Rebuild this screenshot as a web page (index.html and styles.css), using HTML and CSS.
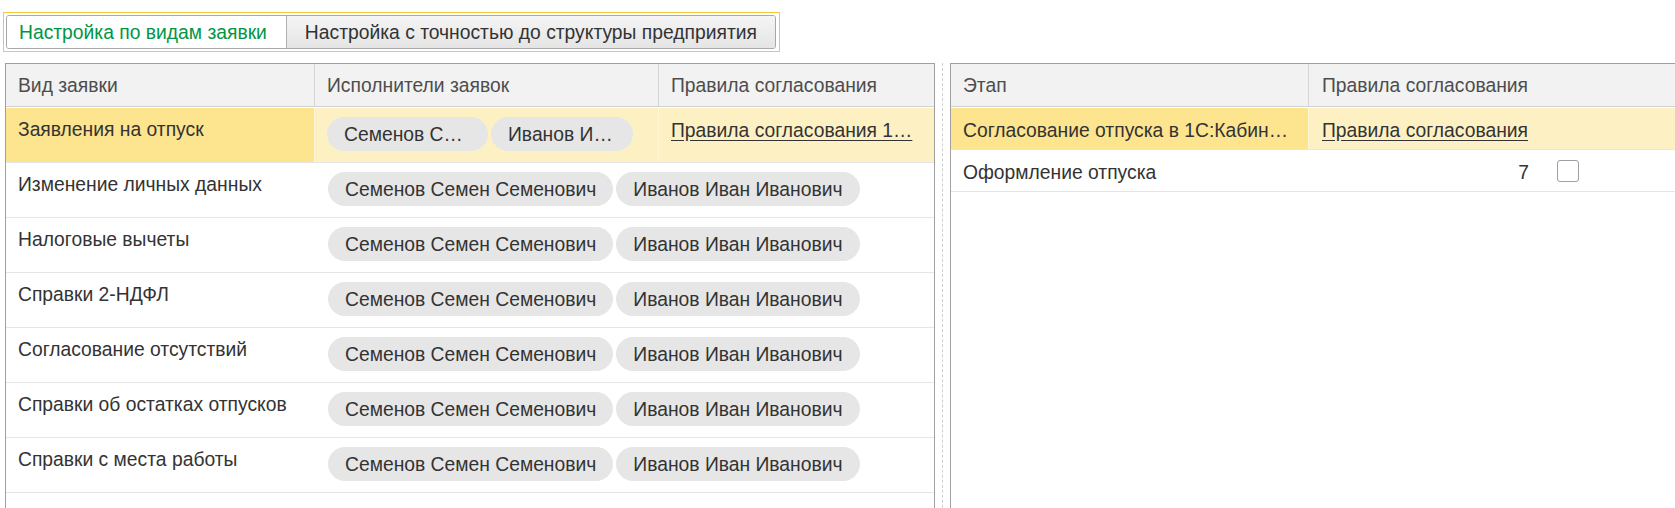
FILE: index.html
```html
<!DOCTYPE html>
<html lang="ru">
<head>
<meta charset="utf-8">
<title>Настройка</title>
<link rel="stylesheet" href="styles.css">
</head>
<body>
<div class="page">
  <div class="tabs-frame">
    <div class="tabs">
      <div class="tab active">Настройка по видам заявки</div>
      <div class="tab">Настройка с точностью до структуры предприятия</div>
    </div>
  </div>
  <div class="panels">
    <div class="grid left">
      <div class="head">
        <div class="hc l1">Вид заявки</div>
        <div class="hc l2">Исполнители заявок</div>
        <div class="hc l3">Правила согласования</div>
      </div>
      <div class="row sel">
        <div class="cell l1 strong">Заявления на отпуск</div>
        <div class="cell l2 light">
          <span class="chip s1">Семенов С…</span>
          <span class="chip s2">Иванов И…</span>
        </div>
        <div class="cell l3 light"><span class="link">Правила согласования 1…</span></div>
      </div>
      <div class="row">
        <div class="cell n1">Изменение личных данных</div>
        <div class="cell chips"><span class="chip">Семенов Семен Семенович</span><span class="chip">Иванов Иван Иванович</span></div>
      </div>
      <div class="row">
        <div class="cell n1">Налоговые вычеты</div>
        <div class="cell chips"><span class="chip">Семенов Семен Семенович</span><span class="chip">Иванов Иван Иванович</span></div>
      </div>
      <div class="row">
        <div class="cell n1">Справки 2-НДФЛ</div>
        <div class="cell chips"><span class="chip">Семенов Семен Семенович</span><span class="chip">Иванов Иван Иванович</span></div>
      </div>
      <div class="row">
        <div class="cell n1">Согласование отсутствий</div>
        <div class="cell chips"><span class="chip">Семенов Семен Семенович</span><span class="chip">Иванов Иван Иванович</span></div>
      </div>
      <div class="row">
        <div class="cell n1">Справки об остатках отпусков</div>
        <div class="cell chips"><span class="chip">Семенов Семен Семенович</span><span class="chip">Иванов Иван Иванович</span></div>
      </div>
      <div class="row">
        <div class="cell n1">Справки с места работы</div>
        <div class="cell chips"><span class="chip">Семенов Семен Семенович</span><span class="chip">Иванов Иван Иванович</span></div>
      </div>
    </div>
    <div class="splitter"><div class="dash"></div></div>
    <div class="grid right">
      <div class="head">
        <div class="hc r1">Этап</div>
        <div class="hc r2">Правила согласования</div>
      </div>
      <div class="rrow">
        <div class="rcell r1 strong">Согласование отпуска в 1С:Кабин…</div>
        <div class="rcell r2 light"><span class="link">Правила согласования</span></div>
      </div>
      <div class="rrow">
        <div class="rcell r1">Оформление отпуска</div>
        <div class="rcell r2"><span class="num">7</span><span class="check"></span></div>
      </div>
    </div>
  </div>
</div>
</body>
</html>
```
FILE: styles.css
```css
html, body {
  margin: 0;
  height: 100%;
  overflow: hidden;
  background: #fff;
}
body {
  font-family: "Liberation Sans", Arial, sans-serif;
  font-size: 19.3px;
  line-height: 23px;
  color: #333;
}
.page {
  padding-top: 12px;
}
.tabs-frame {
  display: inline-flex;
  margin-left: 3px;
  border: 1px solid #f4c83c;
  padding: 2px 3px 2px 2px;
}
.tabs {
  display: flex;
  height: 32px;
  border: 1px solid #a8a8a8;
  border-radius: 3px;
  overflow: hidden;
}
.tab {
  display: flex;
  align-items: center;
  padding: 0 19px 0 12px;
  background: linear-gradient(#f5f5f5, #e5e5e5);
  color: #333;
  white-space: nowrap;
}
.tab + .tab {
  border-left: 1px solid #b0b0b0;
  padding: 0 18px 0 18px;
}
.tab.active {
  background: #fff;
  color: #009646;
}
.panels {
  display: flex;
  margin-top: 11px;
  height: 470px;
}
.grid {
  border-top: 1px solid #a0a0a0;
  border-left: 1px solid #a0a0a0;
}
.left {
  margin-left: 5px;
  width: 928px;
  border-right: 1px solid #a0a0a0;
  flex: none;
}
.right {
  flex: 1;
}
.splitter {
  width: 15px;
  flex: none;
}
.dash {
  margin-left: 7px;
  height: 100%;
  border-left: 1px dashed #cfcfcf;
}
.head {
  display: flex;
  height: 42px;
  background: #f2f2f2;
  border-bottom: 1px solid #d2d2d2;
  margin-bottom: 1px;
  color: #4d4d4d;
}
.hc {
  display: flex;
  align-items: center;
  padding-left: 12px;
  box-sizing: border-box;
  white-space: nowrap;
}
.l1 {
  width: 309px;
  border-right: 1px solid #d6d6d6;
  flex: none;
}
.l2 {
  width: 344px;
  border-right: 1px solid #d6d6d6;
  flex: none;
}
.l3 {
  flex: 1;
}
.row {
  display: flex;
  height: 54px;
  border-bottom: 1px solid #e5e5e5;
}
.cell {
  box-sizing: border-box;
  padding: 10px 0 0 12px;
  white-space: nowrap;
}
.row.sel .cell {
  border-right-color: #fff6d8;
}
.strong {
  background: #fde48f;
}
.light {
  background: #fdf1c4;
}
.l2.light {
  display: flex;
  gap: 3px;
  align-items: flex-start;
  padding-top: 9px;
}
.l3.light {
  padding-top: 11px;
}
.n1 {
  width: 309px;
  flex: none;
}
.chips {
  display: flex;
  gap: 3px;
  align-items: flex-start;
  padding-left: 13px;
  padding-top: 9px;
}
.chip {
  display: inline-flex;
  align-items: center;
  box-sizing: border-box;
  height: 34px;
  padding: 0 17px;
  border-radius: 17px;
  background: #e6e6e6;
  color: #333;
  white-space: nowrap;
  flex: none;
}
.chip.s1 {
  width: 161px;
}
.chip.s2 {
  width: 142px;
}
.link {
  text-decoration: underline;
  text-underline-offset: 3px;
  color: #333;
}
.r1 {
  width: 358px;
  border-right: 1px solid #d6d6d6;
  flex: none;
}
.r2 {
  flex: 1;
  padding-left: 13px;
}
.rrow {
  display: flex;
  height: 41px;
  border-bottom: 1px solid #e5e5e5;
}
.rcell {
  display: flex;
  align-items: center;
  box-sizing: border-box;
  padding-left: 12px;
  padding-top: 3px;
  white-space: nowrap;
  overflow: hidden;
}
.rcell.r1 {
  border-right-color: transparent;
}
.rcell.strong {
  border-right-color: #fff6d8;
}
.rcell.r2 {
  padding-left: 13px;
}
.num {
  width: 207px;
  text-align: right;
}
.check {
  width: 22px;
  height: 22px;
  box-sizing: border-box;
  margin-left: 28px;
  margin-top: -3px;
  border: 1px solid #a0a0a0;
  border-radius: 3px;
  background: #fff;
}
```
